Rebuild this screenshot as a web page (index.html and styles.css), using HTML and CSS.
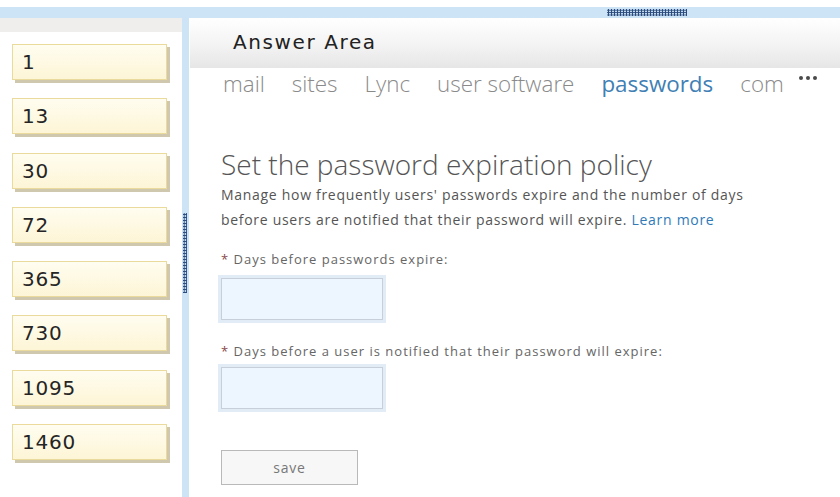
FILE: index.html
```html
<!DOCTYPE html>
<html>
<head>
<meta charset="utf-8">
<link rel="stylesheet" href="styles.css">
</head>
<body>
<div class="topgap"></div>
<div class="topbar"><div class="hgrip"></div></div>
<div class="main">
  <div class="left">
    <div class="leftstrip"></div>
    <div class="cards">
      <div class="card">1</div>
      <div class="card">13</div>
      <div class="card">30</div>
      <div class="card">72</div>
      <div class="card">365</div>
      <div class="card">730</div>
      <div class="card">1095</div>
      <div class="card">1460</div>
    </div>
  </div>
  <div class="divider"><div class="vgrip"></div></div>
  <div class="right">
    <div class="header"><span class="title">Answer Area</span></div>
    <div class="tabs">
      <span class="tab">mail</span>
      <span class="tab">sites</span>
      <span class="tab">Lync</span>
      <span class="tab">user software</span>
      <span class="tab active">passwords</span>
      <span class="tab">com</span>
      <span class="more"><i></i><i></i><i></i></span>
    </div>
    <div class="content">
      <h1 class="heading">Set the password expiration policy</h1>
      <p class="desc">Manage how frequently users' passwords expire and the number of days<br>before users are notified that their password will expire. <a class="link">Learn more</a></p>
      <div class="label"><span class="req">*</span> Days before passwords expire:</div>
      <div class="field"><div class="inner"></div></div>
      <div class="label second"><span class="req">*</span> Days before a user is notified that their password will expire:</div>
      <div class="field second"><div class="inner"></div></div>
      <div class="save">save</div>
    </div>
  </div>
</div>
</body>
</html>
```
FILE: styles.css
```css
html, body {
  margin: 0;
  padding: 0;
  background: #fff;
  width: 840px;
  height: 497px;
  overflow: hidden;
}
.topgap { height: 7px; background: #fff; }
.topbar {
  height: 11px;
  background: #cde3f6;
  display: flex;
  align-items: center;
}
.hgrip {
  margin-left: 607px;
  width: 80px;
  height: 7px;
  background-image: radial-gradient(circle at center, #2c4c7e 0 1px, transparent 1.3px);
  background-size: 3px 2.4px;
}
.main {
  display: flex;
  height: 479px;
}
.left {
  width: 182px;
  background: #fff;
  display: flex;
  flex-direction: column;
}
.leftstrip {
  height: 14px;
  background: #efeeec;
}
.cards {
  display: flex;
  flex-direction: column;
  gap: 18.3px;
  padding: 12px 0 0 12px;
}
.card {
  width: 144px;
  height: 34px;
  border: 1px solid #eadb9c;
  background: linear-gradient(#fffdf0, #fdf5d6);
  box-shadow: 3px 3px 0 #cfc7ae;
  font-family: "DejaVu Sans", Verdana, sans-serif;
  font-size: 20px;
  letter-spacing: 0.8px;
  color: #252525;
  line-height: 34px;
  padding-left: 9px;
}
.divider {
  width: 7px;
  background: #cde3f6;
  margin-right: 1px;
  display: flex;
  flex-direction: column;
}
.vgrip {
  margin-top: 195px;
  margin-left: 1px;
  width: 4px;
  height: 80px;
  background-image: radial-gradient(circle at center, #2c4c7e 0 1px, transparent 1.3px);
  background-size: 2.4px 3px;
}
.right {
  flex: 1;
  display: flex;
  flex-direction: column;
}
.header {
  height: 50px;
  background: linear-gradient(#ffffff, #f3f3f3 55%, #e6e6e6);
  display: flex;
  align-items: center;
  padding-left: 43px;
}
.title {
  font-family: "DejaVu Sans", Verdana, sans-serif;
  font-size: 20px;
  letter-spacing: 1.6px;
  color: #222;
  margin-top: -3px;
}
.tabs {
  display: flex;
  align-items: center;
  gap: 27px;
  padding-left: 33px;
  height: 30px;
  font-family: "Open Sans", sans-serif;
  font-weight: 300;
  font-size: 22.4px;
  color: #8a8a8a;
  white-space: nowrap;
}
.tab.active { color: #3f80b5; font-weight: 400; }
.more {
  display: flex;
  gap: 3px;
  margin-left: -12px;
  margin-top: -10px;
}
.more i {
  width: 4px;
  height: 4px;
  border-radius: 50%;
  background: #4a4a4a;
}
.content {
  padding-left: 31px;
  font-family: "Open Sans", sans-serif;
}
.heading {
  margin: 48px 0 0 0;
  font-weight: 300;
  font-size: 28px;
  color: #555;
  line-height: 36px;
}
.desc {
  margin: 0;
  font-size: 14px;
  letter-spacing: 0.7px;
  color: #555;
  line-height: 25px;
}
.link { color: #2f7ab8; }
.label {
  margin-top: 18px;
  font-size: 13px;
  letter-spacing: 1px;
  color: #666;
  line-height: 18px;
}
.label.second { margin-top: 19px; }
.req { color: #8a4a4a; }
.field {
  margin-top: 7px;
  margin-left: -3px;
  width: 162px;
  height: 42px;
  border: 3px solid #e2ecf7;
  background: #fff;
}
.field.second { margin-top: 4px; }
.inner {
  height: 40px;
  border: 1px solid #c6cfda;
  background: #edf6fe;
}
.save {
  margin-top: 38px;
  width: 135px;
  height: 33px;
  border: 1px solid #b9b9b9;
  background: #f7f7f7;
  color: #777;
  font-size: 14px;
  letter-spacing: 0.8px;
  line-height: 33px;
  text-align: center;
}
```
